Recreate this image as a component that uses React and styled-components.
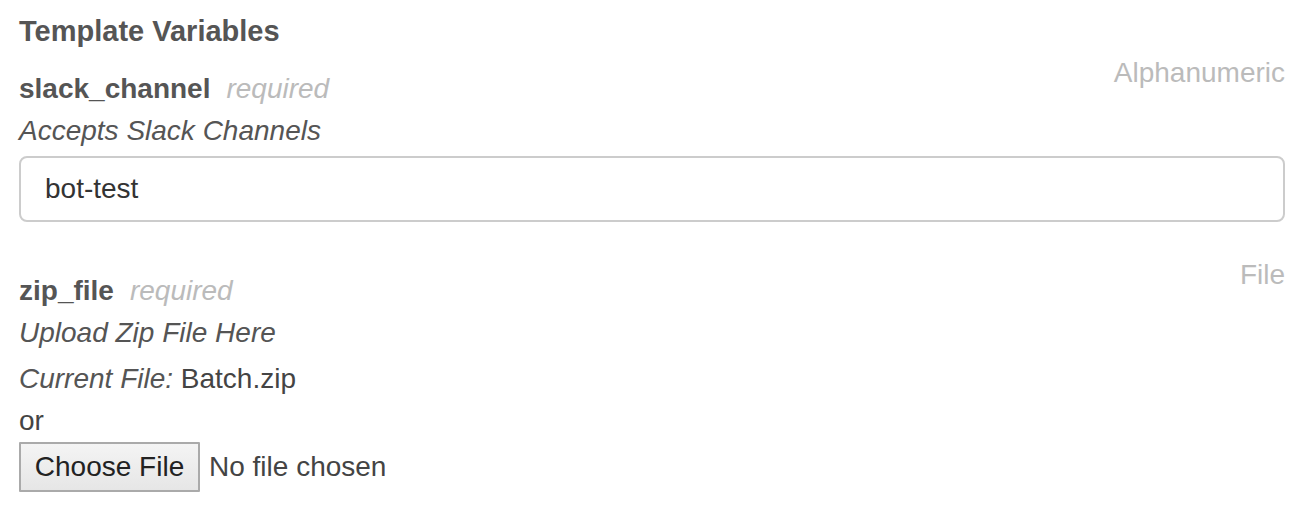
import React from "react";
import styled, { createGlobalStyle } from "styled-components";

const Global = createGlobalStyle`
  html, body { margin: 0; padding: 0; background: #fff; }
  body { font-family: "Liberation Sans", Arial, sans-serif; }
`;

const Page = styled.div`
  padding: 10px 29px 0 19px;
  font-size: 28px;
  line-height: 42px;
  color: #555;
`;

const Title = styled.h5`
  margin: 0;
  font-size: 29px;
  line-height: 42px;
  font-weight: 700;
  color: #555;
`;

const Field = styled.div`
  display: flex;
  flex-direction: column;
  margin-top: ${(p) => p.$gap}px;
`;

const Header = styled.div`
  display: flex;
  justify-content: space-between;
  align-items: flex-start;
`;

const NameLine = styled.div`
  padding-top: 16px;
  display: flex;
  align-items: baseline;
  gap: 16px;
`;

const Name = styled.span`
  font-weight: 700;
  color: #555;
`;

const Required = styled.span`
  font-style: italic;
  color: #bbb;
`;

const TypeLabel = styled.span`
  color: #bbb;
`;

const Help = styled.div`
  font-style: italic;
  color: #555;
  margin-top: ${(p) => p.$mt || 0}px;
`;

const Plain = styled.span`
  font-style: normal;
  color: #444;
`;

const TextInput = styled.input`
  margin-top: 4px;
  box-sizing: border-box;
  width: 100%;
  height: 66px;
  border: 2px solid #ccc;
  border-radius: 8px;
  padding: 0 24px;
  font-family: "Liberation Sans", Arial, sans-serif;
  font-size: 28px;
  color: #333;
  outline: none;
`;

const Or = styled.div`
  color: #444;
`;

const FileRow = styled.div`
  display: flex;
  align-items: center;
  gap: 9px;
`;

const FileButton = styled.button`
  box-sizing: border-box;
  width: 181px;
  height: 50px;
  border: 2px solid #aaa;
  border-radius: 1px;
  background: linear-gradient(#f4f4f4, #e6e6e6);
  font-family: "Liberation Sans", Arial, sans-serif;
  font-size: 28px;
  color: #222;
  padding: 0;
`;

const FileStatus = styled.span`
  color: #444;
`;

export default function App() {
  return (
    <>
      <Global />
      <Page>
        <Title>Template Variables</Title>
        <Field $gap={0}>
          <Header>
            <NameLine>
              <Name>slack_channel</Name>
              <Required>required</Required>
            </NameLine>
            <TypeLabel>Alphanumeric</TypeLabel>
          </Header>
          <Help>Accepts Slack Channels</Help>
          <TextInput defaultValue="bot-test" />
        </Field>
        <Field $gap={32}>
          <Header>
            <NameLine>
              <Name>zip_file</Name>
              <Required>required</Required>
            </NameLine>
            <TypeLabel>File</TypeLabel>
          </Header>
          <Help>Upload Zip File Here</Help>
          <Help $mt={4}>
            Current File: <Plain>Batch.zip</Plain>
          </Help>
          <Or>or</Or>
          <FileRow>
            <FileButton type="button">Choose File</FileButton>
            <FileStatus>No file chosen</FileStatus>
          </FileRow>
        </Field>
      </Page>
    </>
  );
}
